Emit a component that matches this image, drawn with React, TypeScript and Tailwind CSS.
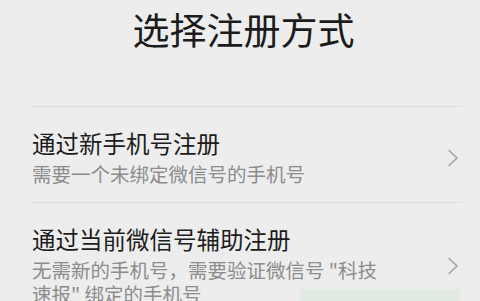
const FONT = { fontFamily: '"Noto Sans CJK SC", "Noto Sans", sans-serif' };

type Option = {
  title: string;
  desc: string[];
};

const options: Option[] = [
  { title: '通过新手机号注册', desc: ['需要一个未绑定微信号的手机号'] },
  {
    title: '通过当前微信号辅助注册',
    desc: ['无需新的手机号，需要验证微信号 "科技', '速报" 绑定的手机号'],
  },
];

function Chevron() {
  return (
    <svg width="12" height="18" viewBox="0 0 12 18" fill="none" className="shrink-0">
      <polyline points="2,1.5 10,9 2,16.5" stroke="#a3a3a3" strokeWidth="1.6" strokeLinecap="round" strokeLinejoin="round" />
    </svg>
  );
}

export default function App() {
  return (
    <div className="relative h-[301px] w-[480px] overflow-hidden bg-[#ededed]" style={FONT}>
      <div className="pt-[7px] pl-[7px] text-center text-[37px] leading-[44px] text-[#1b1b1b]">选择注册方式</div>

      <div className="mt-[55px] ml-[32px] mr-[18px]">
        {options.map((o) => (
          <div key={o.title} className="flex items-center border-t border-[#dcdcdc] pt-[22px] pb-[16px] pr-[3px]">
            <div className="flex-1">
              <div className="text-[23.5px] leading-[28px] text-[#1c1c1c]">{o.title}</div>
              <div className="mt-[5px] text-[19.5px] leading-[24px] text-[#8c8c8c]">
                {o.desc.map((line) => (
                  <div key={line} className="whitespace-nowrap">{line}</div>
                ))}
              </div>
            </div>
            <Chevron />
          </div>
        ))}
      </div>

      <div className="absolute bottom-0 left-[300px] h-[12px] w-[160px] bg-[#e2ebe2]" />
    </div>
  );
}
